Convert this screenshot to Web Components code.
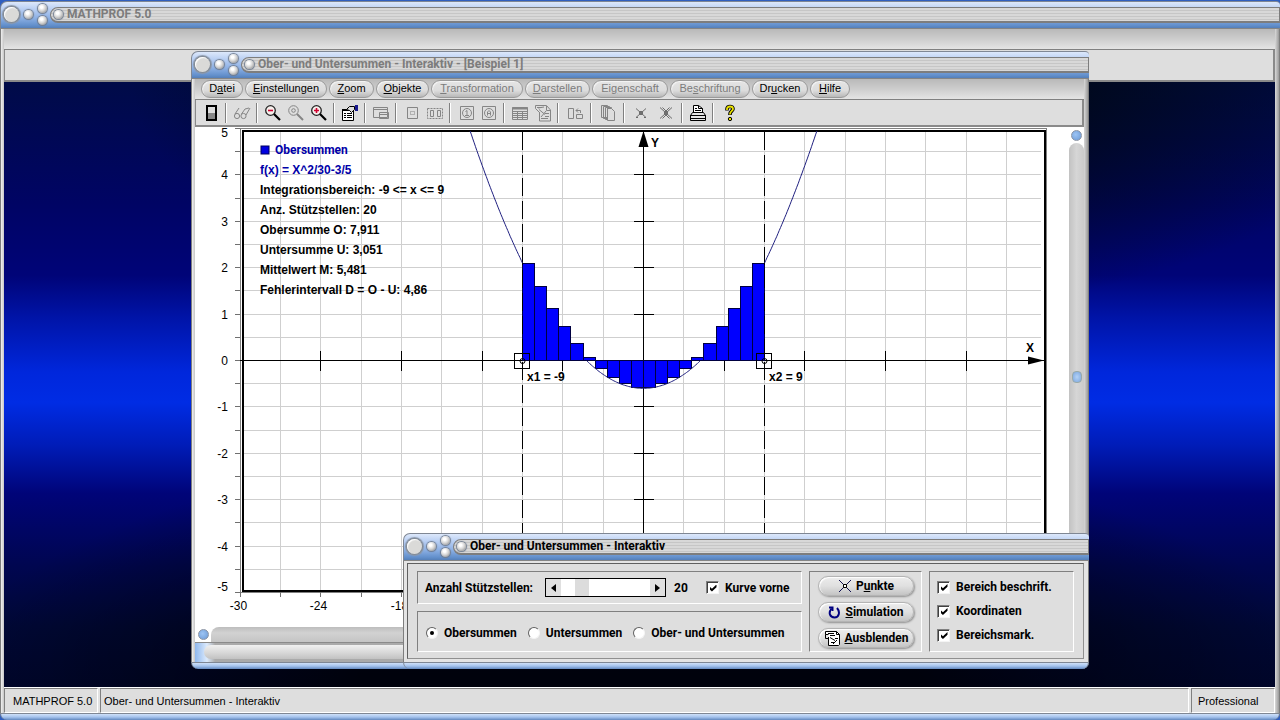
<!DOCTYPE html>
<html lang="de">
<head>
<meta charset="utf-8">
<title>MATHPROF 5.0</title>
<style>
  html, body { height: 100%; }
  body { margin: 0; position: relative; overflow: hidden; background: #2f5fc0;
    font: 11px/14px "Liberation Sans", Arial, sans-serif; color: #000; cursor: default;
    --strong: bold 12px/14px Roboto, "Liberation Sans", sans-serif; }
  mp-window.main { position: absolute; inset: 1px 0 0 0; }
  mp-window.plot { position: absolute; inset: 51px 191px 51px 191px; }
  mp-window.panel { position: absolute; right: 191px; bottom: 51px; height: 136px; width: 686px; }
</style>
</head>
<body>
<mp-window class="main" inactive>
  <span slot="title">MATHPROF 5.0</span>
  <mp-menubar></mp-menubar>
  <mp-toolbar tall></mp-toolbar>
  <mp-desk></mp-desk>
  <mp-status>
    <span slot="app">MATHPROF 5.0</span>
    <span slot="info">Ober- und Untersummen - Interaktiv</span>
    <span slot="edition">Professional</span>
  </mp-status>
</mp-window>

<mp-window class="plot" inactive>
  <span slot="title">Ober- und Untersummen - Interaktiv - [Beispiel 1]</span>
  <mp-menubar>
    <mp-menu style="width:42px">D<u>a</u>tei</mp-menu>
    <mp-menu style="width:82px"><u>E</u>instellungen</mp-menu>
    <mp-menu style="width:45px"><u>Z</u>oom</mp-menu>
    <mp-menu style="width:53px"><u>O</u>bjekte</mp-menu>
    <mp-menu style="width:92px" disabled><u>T</u>ransformation</mp-menu>
    <mp-menu style="width:65px" disabled><u>D</u>arstellen</mp-menu>
    <mp-menu style="width:76px" disabled>Ei<u>g</u>enschaft</mp-menu>
    <mp-menu style="width:80px" disabled>Be<u>s</u>chriftung</mp-menu>
    <mp-menu style="width:56px">Dr<u>u</u>cken</mp-menu>
    <mp-menu style="width:40px"><u>H</u>ilfe</mp-menu>
  </mp-menubar>
  <mp-toolbar
    icons="door | glasses | zoomout zoomfit zoomin | props | panes | point points | one two | table report | swap: | pages: | cross: crosses: | print | help:"></mp-toolbar>
  <mp-plotview></mp-plotview>
</mp-window>

<mp-window class="panel" dialog>
  <span slot="title">Ober- und Untersummen - Interaktiv</span>
  <mp-controls></mp-controls>
</mp-window>

<script>
const define = (name, html, setup) => {
  const tpl = document.createElement('template');
  tpl.innerHTML = html;
  customElements.define(name, class extends HTMLElement {
    constructor() {
      super();
      this.attachShadow({ mode: 'open' }).append(tpl.content.cloneNode(true));
    }
    connectedCallback() {
      if (setup && !this.ready) { this.ready = true; setup(this, this.shadowRoot); }
    }
  });
};

/* ---------- icons ---------- */
const G = '#858585';
const ICONS = {
  door: `<rect x="4" y="1" width="11" height="16" fill="#000"/><rect x="6" y="3" width="7" height="6" fill="#ddd"/><rect x="6" y="9" width="7" height="6" fill="#888"/>`,
  glasses: `<g fill="none" stroke="${G}"><circle cx="4" cy="12" r="2.6"/><circle cx="10.5" cy="12" r="2.6"/><path d="M2 10 6 4M8.500 10 12 5 16 4M13 11l4-7"/></g>`,
  zoomout: `<circle cx="6.500" cy="6.500" r="4.800" fill="#f6f0ec" stroke="#222" stroke-width="1.300"/><path d="M4 6.500h5" stroke="#d00030" stroke-width="1.600"/><path d="M10 10l6 6" stroke="#000" stroke-width="2.200"/>`,
  zoomfit: `<circle cx="6.500" cy="6.500" r="4.800" fill="none" stroke="${G}"/><circle cx="6.500" cy="6.500" r="1.800" fill="none" stroke="${G}"/><path d="M10 10l6 6" stroke="${G}" stroke-width="2"/>`,
  zoomin: `<circle cx="6.500" cy="6.500" r="4.800" fill="#f6f0ec" stroke="#222" stroke-width="1.300"/><path d="M4 6.500h5M6.500 4v5" stroke="#d00030" stroke-width="1.600"/><path d="M10 10l6 6" stroke="#000" stroke-width="2.200"/>`,
  props: `<path d="M1.500 5.500h11v11h-11z" fill="#fff" stroke="#000"/><path d="M1 5h8v2H1z"/><path d="M3 9.500h2M6 9.500h5M3 11.500h2M6 11.500h5M3 13.500h2M6 13.500h5" stroke="#000"/><path d="M5.500 5.500 8.500 2.500h5v3l-3 3-2-2z" fill="#ddd" stroke="#000"/><path d="M14 1h3v6h-3z" fill="#1a1a90"/>`,
  panes: `<g fill="none" stroke="${G}"><path d="M1.500 3.500h14v10h-14zM1 5.500h14M7.500 8.500h9v6h-9zM8 10.500h8"/></g>`,
  point: `<g fill="none" stroke="${G}"><path d="M4.500 3.500h10v11h-10z"/><path d="M7.500 7.500h4v3h-4z" stroke-dasharray="1 1"/></g>`,
  points: `<g fill="none" stroke="${G}"><path d="M1.500 4.500h15v10h-15z" stroke-dasharray="2 1"/><path d="M4.500 6.500h3v6h-3zM11.500 6.500h3v6h-3z"/></g>`,
  one: `<g fill="none" stroke="${G}"><path d="M3.500 2.500h13v13h-13z"/><circle cx="10" cy="9" r="4.500"/><path d="M8.500 7.500l1.500-1v5M8 11.500h4"/></g>`,
  two: `<g fill="none" stroke="${G}"><path d="M2.500 2.500h13v13h-13z"/><circle cx="9" cy="9" r="4.500"/><path d="M7.500 11.500V8L9 6.500 10.500 8v3.500M7.500 9.500h3"/></g>`,
  table: `<g fill="none" stroke="${G}"><path d="M1.500 3.500h15v12h-15z"/><path d="M1 4.500h16" stroke-width="2"/><path d="M2 7.500h14M2 9.500h14M2 11.500h14M2 13.500h14M6.500 7v8M11.500 7v8"/></g>`,
  report: `<g fill="none" stroke="${G}"><path d="M5.500 8v9h11V6l-4-4.500h-11v3l4 4M12.500 2v4.500h4"/><path d="M3 3.500h5M5 5.500l6 5M12 7l-5 6M7 14.500h7M11 9.500h4M11 12.500h4M4 4l6-1"/></g>`,
  swap: `<g fill="none" stroke="${G}"><path d="M2.500 4.500h5v10h-5zM10.500 10.500h6v4h-6zM10 6.500h4.500V9M12 4.500l-2 2 2 2"/></g>`,
  pages: `<g fill="#ddd" stroke="${G}"><path d="M2.500 1.500h6v12h-6zM4.500 2.500h6v12h-6zM6.500 3.500h6v12h-6z"/><path d="M8.500 4.500h4l3 3v9h-7z"/></g>`,
  cross: `<g fill="none" stroke="#6c6c6c"><path d="M4 4.500l10 9M14 4.500l-10 9M4 13.500h2M12 13.500h2"/><path d="M7.500 7.500h3v3h-3z"/></g>`,
  crosses: `<g fill="none" stroke="#6c6c6c"><path d="M3 3.500l12 11M15 3.500l-12 11M5.500 3.500 9 7l3.500-3.500M5.500 14.500 9 11l3.500 3.500"/><path d="M7.500 7.500h3v3h-3z"/></g>`,
  print: `<path d="M4.500 9.500v-8h5l4 3v5" fill="#fff" stroke="#000"/><path d="M9.500 1.500v3h4M6 4.500h2M6 6.500h6" fill="none" stroke="#000"/><path d="M3.500 8.500h11l2 3v5h-15v-5z" fill="#e4e4e4" stroke="#000"/><path d="M1 11.500h16M2 14.500h14" stroke="#000"/>`,
  help: `<path d="M6 6.500V5C6 3.500 7 2.500 9 2.500s3 1 3 2.500S9 7.500 9 10v1" fill="none" stroke="#000" stroke-width="3.600"/><path d="M6 6V5C6 3.500 7 2.500 9 2.500s3 1 3 2.500S9 7.500 9 10v.500" fill="none" stroke="#e8e000" stroke-width="1.800"/><circle cx="9" cy="15" r="1.700" fill="#e8e000" stroke="#000"/>`
};
const svg = (body, size = 18) => `<svg width="${size}" height="${size}" viewBox="0 0 18 18" aria-hidden="true">${body}</svg>`;

/* ---------- window frame ---------- */
define('mp-window', `
<style>
  :host { display: flex; flex-direction: column; box-sizing: border-box; }
  header { height: 28px; box-sizing: border-box; flex: none; display: flex; align-items: center;
    border-top: 1px solid #7f8794; border-left: 1px solid #7f8794; border-bottom: 1px solid #858585;
    border-radius: 7px 4px 0 0;
    background: linear-gradient(#dde8fb, #b6cdf2 30%, #8fb2e6 60%, #628fcb 90%, #557fb8); }
  .knobs { display: flex; align-items: center; gap: 5px; padding-left: 3px; padding-bottom: 1px; }
  .pair { display: grid; gap: 3px; }
  button { display: block; padding: 0; border: 0; width: 9px; height: 9px; border-radius: 50%;
    background: radial-gradient(circle at 40% 35%, #fff 0 15%, #d2d2d2 50%, #8a8a8a 90%);
    box-shadow: 0 0 1px 1px #6f7c90; }
  button.big { width: 15px; height: 15px; background: #dadad8; box-shadow: inset 1px 1px 1px #fff, 0 0 0 1px #838c98, 0 0 1px 2px #8b97a8; }
  .bar { flex: 1; height: 16px; box-sizing: border-box; margin: 1px 0 2px 3px; min-width: 0;
    border: 1px solid #7d7d7d; border-width: 1px 1px 2px 1px; border-radius: 9px 0 0 9px;
    display: flex; align-items: center; gap: 4px; padding-left: 3px;
    background: repeating-linear-gradient(#d8d8d8 0 2px, #c6c6c6 2px 3px);
    font: var(--strong); white-space: nowrap; color: #000; }
  :host([inactive]) .bar { color: #7c7c7c; }
  .sides { flex: 1; min-height: 0; display: flex; flex-direction: column; box-sizing: border-box;
    border-left: 1px solid #7e7e7e; padding-left: 3px; padding-right: 4px; border-right: 1px solid #7e7e7e;
    background: linear-gradient(90deg, #f0f0f0, #b8b8b8 4px, #c8c8c8 50%, #d8d8d8 calc(100% - 4px), #9a9a9a); }
  :host([dialog]) .sides { padding-top: 2px; background: #e4e4e4; }
  footer { flex: none; height: 7px; box-sizing: border-box; border: 1px solid #7f8794; border-width: 1px 1px 0 1px;
    border-radius: 0 0 7px 7px; background: linear-gradient(#cfe0f8, #a6c4ee 50%, #6288bf); }
</style>
<header>
  <div class="knobs"><button class="big" aria-label="Systemmenü"></button><button aria-label="Anheften"></button>
    <div class="pair"><button aria-label="Maximieren"></button><button aria-label="Minimieren"></button></div></div>
  <div class="bar"><button aria-label="Aufrollen"></button><slot name="title"></slot></div>
</header>
<div class="sides"><slot></slot></div>
<footer></footer>`);

/* ---------- menus ---------- */
define('mp-menubar', `
<style>
  :host { display: flex; flex: none; gap: 2px; height: 21px; box-sizing: border-box; padding: 1px 0 0 6px;
    border-bottom: 1px solid #808080; background: linear-gradient(#b9b9b9, #cdcdcd 50%, #e4e4e4); }
</style><slot></slot>`);

define('mp-menu', `
<style>
  :host { display: block; height: 18px; flex: none; }
  button { width: 100%; height: 100%; padding: 0 0 2px; border: 1px solid #9a9a9a; border-radius: 9px; font: inherit;
    color: #000; white-space: nowrap; background: linear-gradient(#e4e4e4, #dcdcdc 60%, #b8b8b8);
    box-shadow: inset 1px 1px 1px #f4f4f4; display: flex; align-items: center; justify-content: center; }
  button:disabled { color: #7c7c7c; }
</style>
<button><span><slot></slot></span></button>`, (el, root) => {
  root.querySelector('button').disabled = el.hasAttribute('disabled');
});

/* ---------- toolbar ---------- */
define('mp-toolbar', `
<style>
  :host { display: flex; flex: none; align-items: center; height: 27px; box-sizing: border-box; padding-left: 3px;
    border: 2px solid #8a8a8a; border-width: 0 2px 2px 1px; background: #dedede; }
  :host([tall]) { height: 32px; }
  button { width: 23px; height: 22px; padding: 0; border: 0; background: none; flex: none;
    display: flex; align-items: center; justify-content: center; }
  button.wide { width: 25px; }
  i { flex: none; width: 1px; height: 20px; margin: 0 3px; border-left: 1px solid #808080; background: #fff; }
</style>`, (el, root) => {
  for (const token of (el.getAttribute('icons') || '').split(/\s+/).filter(Boolean)) {
    if (token === '|') { root.append(document.createElement('i')); continue; }
    const name = token.replace(':', '');
    const b = document.createElement('button');
    b.className = token.endsWith(':') ? 'wide' : '';
    b.setAttribute('aria-label', name);
    b.innerHTML = svg(ICONS[name]);
    root.append(b);
  }
});

/* ---------- desktop and status bar of the main window ---------- */
define('mp-desk', `
<style>
  :host { flex: 1; min-height: 0; display: block;
    background:
      radial-gradient(ellipse 50% 40% at 60% 0, rgba(0,8,16,.75) 50%, transparent),
      radial-gradient(ellipse 55% 40% at 50% 100%, rgba(0,0,0,.75) 40%, transparent),
      linear-gradient(#000b48, #000464 20%, #000478 32%, #0014a8 39%, #0027dc 48%, #002ce4 53%, #001cb8 60%, #000478 68%, #000650 80%, #000838 90%, #00062e); }
</style>`);

define('mp-status', `
<style>
  :host { display: flex; flex: none; gap: 2px; height: 26px; box-sizing: border-box; background: #e2e2e2;
    border-top: 1px solid #fff; }
  div { box-sizing: border-box; border: 1px solid #808080; border-right-color: #fff; border-bottom-color: #fff;
    display: flex; align-items: center; white-space: nowrap; background: #dedede; }
  .app { width: 94px; padding-left: 8px; }
  .info { flex: 1; padding-left: 3px; }
  .edition { width: 84px; padding-left: 6px; }
</style>
<div class="app"><slot name="app"></slot></div>
<div class="info"><slot name="info"></slot></div>
<div class="edition"><slot name="edition"></slot></div>`);

/* ---------- plot area with its scroll bars ---------- */
define('mp-plotview', `
<style>
  :host { flex: 1; min-height: 0; display: grid; grid-template: 1fr 16px 19px / 1fr 15px; background: #fff; }
  mp-chart { min-height: 0; min-width: 0; }
  .v { background: #fff; display: flex; flex-direction: column; align-items: center; padding-top: 3px; }
  .knob { width: 11px; height: 11px; box-sizing: border-box; border-radius: 50%; border: 1px solid #8a94a4; flex: none;
    background: radial-gradient(circle at 40% 40%, #9cc4f4, #6b98d4); }
  .track { flex: 1; align-self: stretch; margin-top: 2px; border-radius: 8px 8px 0 0; display: flex; justify-content: center;
    align-items: center; background: linear-gradient(90deg, #c2c2c2, #d6d6d6 50%, #cacaca); }
  .thumb { width: 10px; height: 12px; margin-bottom: 16px; border-radius: 4px; background: radial-gradient(#b4d2f6, #7ba6de); border: 1px solid #9aa; box-sizing: border-box; }
  .h { grid-column: 1 / 3; display: flex; align-items: center; padding-left: 3px; border-bottom: 1px solid #8a8a8a; }
  .h .track { margin: 0 0 0 2px; height: 100%; border-radius: 8px 0 0 0; background: linear-gradient(#bdbdbd, #d2d2d2 40%, #c4c4c4); }
  .s { grid-column: 1 / 3; background: linear-gradient(90deg, #8fb8ee, #dceafc 12px, #aaa 20px); padding: 2px 0 3px 9px; display: flex; }
  .s div { flex: 1; border-radius: 8px 0 0 8px; background: linear-gradient(#f0f0f0, #dadada 50%, #c2c2c2); }
</style>
<mp-chart></mp-chart>
<div class="v"><span class="knob"></span><div class="track"><span class="thumb"></span></div></div>
<div class="h"><span class="knob"></span><div class="track"></div></div>
<div class="s"><div></div></div>`);

define('mp-chart', `
<style>
  :host { display: block; }
  svg { display: block; width: 100%; height: 100%; }
  text { font: 12px "Liberation Sans", Arial, sans-serif; fill: #000; }
  .b { font-weight: bold; }
  .blue { fill: #0000a8; }
  .r { font: var(--strong); }
  .mark { font-size: 11px; }
</style>
<svg viewBox="0 0 874 500" preserveAspectRatio="xMinYMin meet"></svg>`, (el, root) => {
  const OX = 448, OY = 233.5, SX = 13.44, SY = 46.4;
  const px = x => Math.round(OX + x * SX) + 0.5;
  const py = y => Math.floor(OY - y * SY) + 0.5;
  const f = x => x * x / 30 - 3 / 5;
  const line = (x1, y1, x2, y2, c, extra = '') => `<path d="M${x1} ${y1}L${x2} ${y2}" stroke="${c}" ${extra}/>`;
  let grid = '', ticks = '', bars = '', labels = '';
  for (let x = -27; x <= 27; x += 3) grid += line(px(x), 5, px(x), 463, '#cfcfcf');
  for (let y = -4.5; y <= 4.5; y += 0.5) grid += line(48, py(y), 846, py(y), '#cfcfcf');
  for (let y = -5; y <= 5; y += 0.5) ticks += line(40, py(y), 45, py(y), '#707070');
  for (let x = -30; x <= 30; x += 3) ticks += line(px(x), 465, px(x), 470, '#707070');
  for (let x = -24; x <= 24; x += 6) ticks += line(px(x), 224, px(x), 244, '#000');
  for (let y = -4; y <= 4; y++) ticks += line(439, py(y), 459, py(y), '#000');
  for (let i = 0; i < 20; i++) {
    const a = -9 + i * 0.9, b = a + 0.9, h = f(Math.max(Math.abs(a), Math.abs(b)));
    const top = Math.min(py(h), py(0)), bot = Math.max(py(h), py(0));
    bars += `<rect x="${px(a)}" y="${top}" width="${px(b) - px(a)}" height="${bot - top}" fill="#0000ff" stroke="#000040"/>`;
  }
  const curve = side => {
    let d = '';
    for (let x = 9; x <= 12.94; x += 0.1) d += (d ? 'L' : 'M') + (OX + 0.5 + side * x * SX).toFixed(1) + ' ' + (OY - f(x) * SY).toFixed(1);
    return d;
  };
  let d = curve(-1) + curve(1), low = '';
  for (let x = -4.2; x <= 4.25; x += 0.1) low += (low ? 'L' : 'M') + (OX + 0.5 + x * SX).toFixed(1) + ' ' + (OY - f(x) * SY).toFixed(1);
  d += low;
  for (let y = -5; y <= 5; y++) {
    const ty = y === 5 ? 10 : y === -5 ? 464 : py(y) + 4;
    labels += `<text x="33" y="${ty}" text-anchor="end">${y}</text>`;
  }
  for (const x of [-30, -24, -18]) labels += `<text x="${px(x) - 2}" y="483" text-anchor="middle">${x}</text>`;
  const info = ['Integrationsbereich: -9 <= x <= 9', 'Anz. Stützstellen: 20', 'Obersumme O: 7,911',
    'Untersumme U: 3,051', 'Mittelwert M: 5,481', 'Fehlerintervall D = O - U: 4,86'];
  const esc = s => s.replace(/</g, '&lt;');
  const marker = x => `<rect x="${px(x) - 8}" y="226.5" width="15" height="15"/><circle cx="${px(x)}" cy="234" r="2.5"/>`;
  root.querySelector('svg').innerHTML = `
    <g fill="none" shape-rendering="crispEdges">
      <path d="M45.500 1v464.500h806V1M45 1.500h807" stroke="#808080"/>
      ${grid}
      <path d="M48 4h802v460H48z" stroke="#000" stroke-width="2"/>
      ${line(45, 233.5, 849, 233.5, '#000')}
      ${line(448.5, 5, 448.5, 463, '#000')}
      ${ticks}${bars}
      ${line(px(-9), 5, px(-9), 463, '#000', 'stroke-dasharray="18 5"')}
      ${line(px(9), 5, px(9), 463, '#000', 'stroke-dasharray="18 5"')}
    </g>
    <path d="${d}" fill="none" stroke="#202080"/>
    <g fill="none" stroke="#000">${marker(-9)}${marker(9)}</g>
    <path d="M448.500 4l-5 16h10zM849 233.500l-16-4v8z"/>
    ${labels}
    <text class="b" x="831" y="225">X</text><text class="b" x="456" y="20">Y</text>
    <text class="b" x="332" y="254">x1 = -9</text><text class="b mark" x="574" y="254">x2 = 9</text>
    <rect x="66" y="19" width="8" height="8" fill="#0000e0" stroke="#000060"/>
    <text class="r blue" x="80" y="27">Obersummen</text>
    <text class="b blue" x="65" y="47">f(x) = X^2/30-3/5</text>
    ${info.map((t, i) => `<text class="b" x="65" y="${67 + i * 20}">${esc(t)}</text>`).join('')}`;
  root.querySelector('.mark').classList.remove('mark');
});

/* ---------- form controls ---------- */
define('mp-choice', `
<style>
  :host { display: block; }
  label { display: flex; align-items: center; gap: 6px; white-space: nowrap; }
  input { appearance: none; margin: 0; flex: none; box-sizing: border-box; background: #fff; }
  input[type=checkbox] { width: 13px; height: 13px; border: 1px solid #808080; border-right-color: #f4f4f4; border-bottom-color: #f4f4f4;
    box-shadow: inset 1px 1px #404040; display: grid; place-items: center; }
  input[type=checkbox]:checked::before { content: ""; width: 7px; height: 7px; margin: 1px 0 0 1px; background: #000;
    clip-path: polygon(0 30%, 35% 62%, 100% 0, 100% 38%, 35% 100%, 0 68%); }
  input[type=radio] { width: 12px; height: 12px; border-radius: 50%; border: 1px solid #606060; border-right-color: #f4f4f4; border-bottom-color: #f4f4f4;
    display: grid; place-items: center; }
  input[type=radio]:checked::before { content: ""; width: 4px; height: 4px; border-radius: 50%; background: #000; }
</style>
<label><input><span><slot></slot></span></label>`, (el, root) => {
  const i = root.querySelector('input');
  i.type = el.getAttribute('type') || 'checkbox';
  i.checked = el.hasAttribute('checked');
});

define('mp-button', `
<style>
  :host { display: block; }
  button { width: 100%; height: 20px; padding: 0 3px; border: 1px solid #b4b4b4; border-radius: 10px; font: inherit; color: #000;
    display: flex; align-items: center; justify-content: center; gap: 4px; white-space: nowrap;
    background: linear-gradient(#ececec, #e0e0e0 50%, #c4c4c4); box-shadow: inset 1px 1px 1px #fff, 1px 1px 2px #909090; }
</style>
<button><slot name="icon"></slot><span><slot></slot></span></button>`);

define('mp-spin', `
<style>
  :host { display: flex; width: 121px; height: 19px; box-sizing: border-box; border: 1px solid #000; background: #fff; }
  button { width: 15px; padding: 0; border: 0; flex: none; background: #e0e0e0; display: flex; align-items: center; justify-content: center; }
  input { appearance: none; flex: 1; min-width: 0; margin: 0; height: 100%; background: #fff; }
  input::-webkit-slider-thumb { appearance: none; width: 14px; height: 17px; background: #dcdcdc; }
</style>
<button aria-label="Weniger"><svg width="5" height="8"><path d="M5 0v8L0 4z"/></svg></button>
<input type="range" min="1" max="100" value="20" aria-label="Anzahl Stützstellen">
<button aria-label="Mehr"><svg width="5" height="8"><path d="M0 0v8l5-4z"/></svg></button>`);

define('mp-controls', `
<style>
  :host { flex: 1; display: grid; grid-template-columns: 1fr 113px 145px; gap: 7px; font: var(--strong);
    padding: 7px 9px 6px 9px; background: #dedede; border: 1px solid #606060; border-right-color: #909090; border-bottom-color: #909090;
    margin-bottom: 3px; box-sizing: border-box; }
  .left { display: grid; grid-template-rows: 33px 1fr; gap: 7px; }
  .group { box-sizing: border-box; border: 1px solid #808080; border-right-color: #fff; border-bottom-color: #fff; display: flex; }
  .count { align-items: center; padding-left: 7px; gap: 8px; }
  .count span { min-width: 16px; }
  .count span:first-child { min-width: 112px; }
  .count mp-choice { margin-left: 8px; }
  .kind { align-items: center; padding: 3px 0 0 8px; gap: 11px; }
  .buttons { flex-direction: column; gap: 6px; padding: 4px 7px 0 8px; }
  .marks { flex-direction: column; gap: 10px; padding: 8px 0 0 7px; }
</style>
<div class="left">
  <div class="group count"><span>Anzahl Stützstellen:</span><mp-spin></mp-spin><span>20</span>
    <mp-choice checked>Kurve vorne</mp-choice></div>
  <div class="group kind"><mp-choice type="radio" checked>Obersummen</mp-choice>
    <mp-choice type="radio">Untersummen</mp-choice><mp-choice type="radio">Ober- und Untersummen</mp-choice></div>
</div>
<div class="group buttons">
  <mp-button><svg slot="icon" width="14" height="14" viewBox="0 0 14 14" fill="none" stroke="#101050"><path d="M1 1l5 5M13 1 8 6M1 13l5-5M13 13 8 8"/><path d="M5.500 5.500h3v3h-3z" fill="#fff" stroke="#000"/></svg>P<u>u</u>nkte</mp-button>
  <mp-button><svg slot="icon" width="13" height="14" viewBox="0 0 13 14" fill="none" stroke="#000080" stroke-width="2"><path d="M3.500 3.500C0 8 2 12.500 6.500 12.500S12.500 7 9 3"/><path d="M1 2.500h3.500V6"/></svg><u>S</u>imulation</mp-button>
  <mp-button><svg slot="icon" width="17" height="17" viewBox="0 0 17 17" fill="#fff" stroke="#000"><path d="M4.500 7v8.500h10l1-1v-10l-3-3h-11v3h3"/><path d="M1.500 4.500v4h3M12.500 1.500v3h3M4 3.500h6M6 5.500h5M6 7.500l5 3M7 12.500h4M9 14l4-4M11 8.500h3" fill="none"/></svg><u>A</u>usblenden</mp-button>
</div>
<div class="group marks">
  <mp-choice checked>Bereich beschrift.</mp-choice>
  <mp-choice checked>Koordinaten</mp-choice>
  <mp-choice checked>Bereichsmark.</mp-choice>
</div>`);
</script>
</body>
</html>
